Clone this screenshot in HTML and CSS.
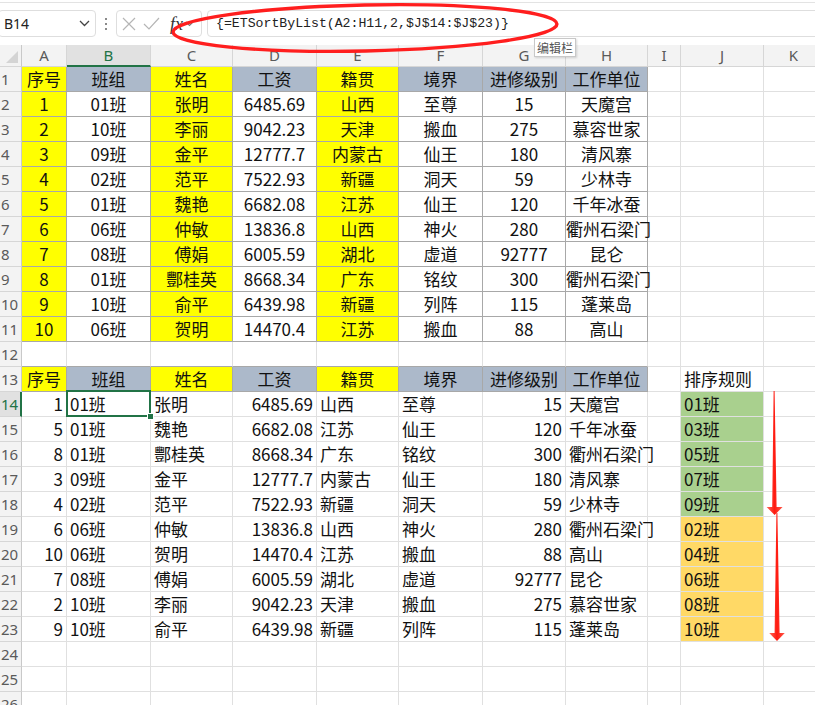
FILE: index.html
```html
<!DOCTYPE html>
<html lang="zh-CN">
<head>
<meta charset="utf-8">
<title>ETSortByList</title>
<link rel="stylesheet" href="styles.css">
</head>
<body>
<div class="app">
  <div class="toolbar">
    <div class="namebox">
      <span class="nb-text">B14</span>
      <svg class="chev" width="11" height="7" viewBox="0 0 11 7"><path d="M1 1 L5.5 5.5 L10 1" fill="none" stroke="#444" stroke-width="1.3"/></svg>
    </div>
    <div class="grip"><i></i><i></i><i></i></div>
    <div class="fxbox">
      <svg class="ico" width="14" height="14" viewBox="0 0 14 14"><path d="M1 1 L13 13 M13 1 L1 13" stroke="#b5b5b5" stroke-width="1.2" fill="none"/></svg>
      <svg class="ico" width="17" height="13" viewBox="0 0 17 13"><path d="M1 7 L6 12 L16 1" stroke="#b5b5b5" stroke-width="1.2" fill="none"/></svg>
      <span class="fx">fx</span>
      <svg class="chev2" width="9" height="6" viewBox="0 0 9 6"><path d="M1 1 L4.5 4.5 L8 1" fill="none" stroke="#777" stroke-width="1.1"/></svg>
    </div>
    <div class="formula">{=ETSortByList(A2:H11,2,$J$14:$J$23)}</div>
  </div>

  <div class="sheet">
    <!-- column headers -->
    <div class="corner"></div>
    <div class="ch">A</div><div class="ch sel">B</div><div class="ch">C</div><div class="ch">D</div><div class="ch">E</div><div class="ch">F</div><div class="ch">G</div><div class="ch">H</div><div class="ch">I</div><div class="ch">J</div><div class="ch">K</div>

    <!-- row 1 -->
    <div class="rh">1</div>
    <div class="c t y m">序号</div><div class="c t s m">班组</div><div class="c t y m">姓名</div><div class="c t s m">工资</div><div class="c t y m">籍贯</div><div class="c t s m">境界</div><div class="c t s m">进修级别</div><div class="c t s m">工作单位</div><div class="c"></div><div class="c"></div><div class="c"></div>
    <!-- row 2 -->
    <div class="rh">2</div>
    <div class="c t y m">1</div><div class="c t m">01班</div><div class="c t y m">张明</div><div class="c t m">6485.69</div><div class="c t y m">山西</div><div class="c t m">至尊</div><div class="c t m">15</div><div class="c t m">天魔宫</div><div class="c"></div><div class="c"></div><div class="c"></div>
    <!-- row 3 -->
    <div class="rh">3</div>
    <div class="c t y m">2</div><div class="c t m">10班</div><div class="c t y m">李丽</div><div class="c t m">9042.23</div><div class="c t y m">天津</div><div class="c t m">搬血</div><div class="c t m">275</div><div class="c t m">慕容世家</div><div class="c"></div><div class="c"></div><div class="c"></div>
    <!-- row 4 -->
    <div class="rh">4</div>
    <div class="c t y m">3</div><div class="c t m">09班</div><div class="c t y m">金平</div><div class="c t m">12777.7</div><div class="c t y m">内蒙古</div><div class="c t m">仙王</div><div class="c t m">180</div><div class="c t m">清风寨</div><div class="c"></div><div class="c"></div><div class="c"></div>
    <!-- row 5 -->
    <div class="rh">5</div>
    <div class="c t y m">4</div><div class="c t m">02班</div><div class="c t y m">范平</div><div class="c t m">7522.93</div><div class="c t y m">新疆</div><div class="c t m">洞天</div><div class="c t m">59</div><div class="c t m">少林寺</div><div class="c"></div><div class="c"></div><div class="c"></div>
    <!-- row 6 -->
    <div class="rh">6</div>
    <div class="c t y m">5</div><div class="c t m">01班</div><div class="c t y m">魏艳</div><div class="c t m">6682.08</div><div class="c t y m">江苏</div><div class="c t m">仙王</div><div class="c t m">120</div><div class="c t m">千年冰蚕</div><div class="c"></div><div class="c"></div><div class="c"></div>
    <!-- row 7 -->
    <div class="rh">7</div>
    <div class="c t y m">6</div><div class="c t m">06班</div><div class="c t y m">仲敏</div><div class="c t m">13836.8</div><div class="c t y m">山西</div><div class="c t m">神火</div><div class="c t m">280</div><div class="c t m">衢州石梁门</div><div class="c"></div><div class="c"></div><div class="c"></div>
    <!-- row 8 -->
    <div class="rh">8</div>
    <div class="c t y m">7</div><div class="c t m">08班</div><div class="c t y m">傅娟</div><div class="c t m">6005.59</div><div class="c t y m">湖北</div><div class="c t m">虚道</div><div class="c t m">92777</div><div class="c t m">昆仑</div><div class="c"></div><div class="c"></div><div class="c"></div>
    <!-- row 9 -->
    <div class="rh">9</div>
    <div class="c t y m">8</div><div class="c t m">01班</div><div class="c t y m">酆桂英</div><div class="c t m">8668.34</div><div class="c t y m">广东</div><div class="c t m">铭纹</div><div class="c t m">300</div><div class="c t m">衢州石梁门</div><div class="c"></div><div class="c"></div><div class="c"></div>
    <!-- row 10 -->
    <div class="rh">10</div>
    <div class="c t y m">9</div><div class="c t m">10班</div><div class="c t y m">俞平</div><div class="c t m">6439.98</div><div class="c t y m">新疆</div><div class="c t m">列阵</div><div class="c t m">115</div><div class="c t m">蓬莱岛</div><div class="c"></div><div class="c"></div><div class="c"></div>
    <!-- row 11 -->
    <div class="rh">11</div>
    <div class="c t y m">10</div><div class="c t m">06班</div><div class="c t y m">贺明</div><div class="c t m">14470.4</div><div class="c t y m">江苏</div><div class="c t m">搬血</div><div class="c t m">88</div><div class="c t m">高山</div><div class="c"></div><div class="c"></div><div class="c"></div>
    <!-- row 12 -->
    <div class="rh">12</div>
    <div class="c bb"></div><div class="c bb"></div><div class="c bb"></div><div class="c bb"></div><div class="c bb"></div><div class="c bb"></div><div class="c bb"></div><div class="c bb"></div><div class="c"></div><div class="c"></div><div class="c"></div>
    <!-- row 13 -->
    <div class="rh">13</div>
    <div class="c t y m">序号</div><div class="c t s m">班组</div><div class="c t y m">姓名</div><div class="c t s m">工资</div><div class="c t y m">籍贯</div><div class="c t s m">境界</div><div class="c t s m">进修级别</div><div class="c t s m">工作单位</div><div class="c"></div><div class="c">排序规则</div><div class="c"></div>
    <!-- row 14 -->
    <div class="rh selr">14</div>
    <div class="c r">1</div><div class="c cur">01班</div><div class="c">张明</div><div class="c r">6485.69</div><div class="c">山西</div><div class="c">至尊</div><div class="c r">15</div><div class="c">天魔宫</div><div class="c"></div><div class="c gn">01班</div><div class="c"></div>
    <!-- row 15 -->
    <div class="rh">15</div>
    <div class="c r">5</div><div class="c">01班</div><div class="c">魏艳</div><div class="c r">6682.08</div><div class="c">江苏</div><div class="c">仙王</div><div class="c r">120</div><div class="c">千年冰蚕</div><div class="c"></div><div class="c gn">03班</div><div class="c"></div>
    <!-- row 16 -->
    <div class="rh">16</div>
    <div class="c r">8</div><div class="c">01班</div><div class="c">酆桂英</div><div class="c r">8668.34</div><div class="c">广东</div><div class="c">铭纹</div><div class="c r">300</div><div class="c">衢州石梁门</div><div class="c"></div><div class="c gn">05班</div><div class="c"></div>
    <!-- row 17 -->
    <div class="rh">17</div>
    <div class="c r">3</div><div class="c">09班</div><div class="c">金平</div><div class="c r">12777.7</div><div class="c">内蒙古</div><div class="c">仙王</div><div class="c r">180</div><div class="c">清风寨</div><div class="c"></div><div class="c gn">07班</div><div class="c"></div>
    <!-- row 18 -->
    <div class="rh">18</div>
    <div class="c r">4</div><div class="c">02班</div><div class="c">范平</div><div class="c r">7522.93</div><div class="c">新疆</div><div class="c">洞天</div><div class="c r">59</div><div class="c">少林寺</div><div class="c"></div><div class="c gn">09班</div><div class="c"></div>
    <!-- row 19 -->
    <div class="rh">19</div>
    <div class="c r">6</div><div class="c">06班</div><div class="c">仲敏</div><div class="c r">13836.8</div><div class="c">山西</div><div class="c">神火</div><div class="c r">280</div><div class="c">衢州石梁门</div><div class="c"></div><div class="c or">02班</div><div class="c"></div>
    <!-- row 20 -->
    <div class="rh">20</div>
    <div class="c r">10</div><div class="c">06班</div><div class="c">贺明</div><div class="c r">14470.4</div><div class="c">江苏</div><div class="c">搬血</div><div class="c r">88</div><div class="c">高山</div><div class="c"></div><div class="c or">04班</div><div class="c"></div>
    <!-- row 21 -->
    <div class="rh">21</div>
    <div class="c r">7</div><div class="c">08班</div><div class="c">傅娟</div><div class="c r">6005.59</div><div class="c">湖北</div><div class="c">虚道</div><div class="c r">92777</div><div class="c">昆仑</div><div class="c"></div><div class="c or">06班</div><div class="c"></div>
    <!-- row 22 -->
    <div class="rh">22</div>
    <div class="c r">2</div><div class="c">10班</div><div class="c">李丽</div><div class="c r">9042.23</div><div class="c">天津</div><div class="c">搬血</div><div class="c r">275</div><div class="c">慕容世家</div><div class="c"></div><div class="c or">08班</div><div class="c"></div>
    <!-- row 23 -->
    <div class="rh">23</div>
    <div class="c r">9</div><div class="c">10班</div><div class="c">俞平</div><div class="c r">6439.98</div><div class="c">新疆</div><div class="c">列阵</div><div class="c r">115</div><div class="c">蓬莱岛</div><div class="c"></div><div class="c or">10班</div><div class="c"></div>
    <!-- row 24 -->
    <div class="rh">24</div>
    <div class="c"></div><div class="c"></div><div class="c"></div><div class="c"></div><div class="c"></div><div class="c"></div><div class="c"></div><div class="c"></div><div class="c"></div><div class="c"></div><div class="c"></div>
    <!-- row 25 -->
    <div class="rh">25</div>
    <div class="c"></div><div class="c"></div><div class="c"></div><div class="c"></div><div class="c"></div><div class="c"></div><div class="c"></div><div class="c"></div><div class="c"></div><div class="c"></div><div class="c"></div>
    <!-- row 26 -->
    <div class="rh">26</div>
    <div class="c"></div><div class="c"></div><div class="c"></div><div class="c"></div><div class="c"></div><div class="c"></div><div class="c"></div><div class="c"></div><div class="c"></div><div class="c"></div><div class="c"></div>
  </div>

  <!-- overlays: annotation ellipse, tooltip, arrows -->
  <svg class="overlay" width="815" height="705" viewBox="0 0 815 705">
    <defs>
      <linearGradient id="ag" x1="0" y1="0" x2="1" y2="0">
        <stop offset="0" stop-color="#ff6a5a"/>
        <stop offset="0.5" stop-color="#ff1a10"/>
        <stop offset="1" stop-color="#ff5a4a"/>
      </linearGradient>
    </defs>
    <ellipse cx="365" cy="28" rx="192" ry="23" transform="rotate(-1.2 365 28)" fill="none" stroke="#ff1e1e" stroke-width="3.4"/>
    <polygon points="773.6,391 774.6,391 776.6,507 782.6,507 774.6,515 766.6,507 772.2,507" fill="url(#ag)"/>
    <polygon points="776.4,513 777.4,513 779.6,633 784.8,633 777,641 769.2,633 774.6,633" fill="url(#ag)"/>
  </svg>
  <div class="tip">编辑栏</div>
</div>
</body>
</html>
```

FILE: styles.css
```css
html, body {
  margin: 0;
  padding: 0;
  background: #ffffff;
}
body {
  width: 815px;
  height: 705px;
  overflow: hidden;
  font-family: "Noto Sans CJK SC", "Noto Sans", sans-serif;
}
.app {
  position: relative;
  width: 815px;
  height: 705px;
  overflow: hidden;
}

/* ---------- toolbar ---------- */
.toolbar {
  height: 43px;
  box-sizing: border-box;
  border-top: 1px solid #e3e3e3;
  margin-top: 2px;
  padding-top: 7px;
  display: flex;
  align-items: flex-start;
}
.namebox {
  width: 98px;
  height: 27px;
  margin-left: -2px;
  box-sizing: border-box;
  border: 1px solid #dedede;
  border-radius: 4px;
  display: flex;
  align-items: center;
  justify-content: space-between;
  padding: 0 5px 0 5px;
  font-size: 14px;
  color: #222;
}
.nb-text { font-family: "Noto Sans", sans-serif; }
.grip {
  width: 20px;
  height: 27px;
  display: flex;
  flex-direction: column;
  align-items: center;
  justify-content: center;
  gap: 3px;
}
.grip i {
  display: block;
  width: 2px;
  height: 2px;
  background: #8a8a8a;
}
.fxbox {
  width: 86px;
  height: 27px;
  box-sizing: border-box;
  border: 1px solid #dedede;
  border-radius: 4px;
  display: flex;
  align-items: center;
  padding-left: 5px;
  gap: 7px;
}
.fxbox .ico { display: block; }
.fx {
  font-family: "Liberation Serif", "DejaVu Serif", serif;
  font-style: italic;
  font-size: 18px;
  color: #333;
  margin-left: 3px;
  line-height: 1;
}
.chev2 { margin-left: -5px; margin-top: 1px; }
.formula {
  flex: 1;
  height: 27px;
  margin-left: 5px;
  margin-right: -6px;
  box-sizing: border-box;
  border: 1px solid #dedede;
  border-radius: 4px;
  padding-left: 8px;
  font-family: "Liberation Mono", "DejaVu Sans Mono", monospace;
  font-size: 13.2px;
  line-height: 25px;
  color: #222;
  white-space: nowrap;
}

/* ---------- sheet ---------- */
.sheet {
  display: grid;
  grid-template-columns: 22px 45px 84px 82px 84px 82px 84px 83px 82px 33px 83px 60px;
  grid-template-rows: 22px;
  grid-auto-rows: 25px;
}
.corner, .ch, .rh {
  box-sizing: border-box;
  background: #f3f3f3;
  color: #5a5a5a;
  font-family: "Noto Sans", sans-serif;
  font-size: 15px;
  text-align: center;
  border-right: 1px solid #d6d6d6;
  border-bottom: 1px solid #d6d6d6;
  white-space: nowrap;
}
.corner {
  position: relative;
  border-right-color: #c9c9c9;
}
.corner::after {
  content: "";
  position: absolute;
  right: 3px;
  bottom: 3px;
  width: 0;
  height: 0;
  border-left: 12px solid transparent;
  border-bottom: 12px solid #d4d4d4;
}
.ch {
  line-height: 21px;
}
.ch.sel {
  background: #e1e1e1;
  color: #217346;
  border-bottom: 2px solid #217346;
}
.rh {
  line-height: 24px;
  border-right-color: #c9c9c9;
  font-size: 15px;
  text-align: left;
  padding-left: 1px;
  overflow: visible;
}
.rh.selr {
  background: #e1e1e1;
  color: #217346;
  border-right: 2px solid #217346;
}
.c {
  box-sizing: border-box;
  border-right: 1px solid #e0e0e0;
  border-bottom: 1px solid #e0e0e0;
  font-size: 17px;
  line-height: 24px;
  color: #111;
  padding: 0 3px;
  white-space: nowrap;
  overflow: visible;
  position: relative;
}
.c.t {
  border-right-color: #a8a8a8;
  border-bottom-color: #a8a8a8;
}
.c.bb {
  border-bottom-color: #a8a8a8;
}
.c.m { text-align: center; padding: 0; }
.c.r { text-align: right; }
.c.y { background: #ffff00; }
.c.s { background: #acb9ca; }
.c.gn { background: #a9d08e; }
.c.or { background: #ffd966; }

.c.cur::after {
  content: "";
  position: absolute;
  left: -1px;
  top: -2px;
  right: -1px;
  bottom: -1px;
  border: 2px solid #217346;
  box-sizing: border-box;
}
.c.cur::before {
  content: "";
  position: absolute;
  right: -3px;
  bottom: -3px;
  width: 5px;
  height: 5px;
  background: #217346;
  outline: 1px solid #ffffff;
  z-index: 2;
}

/* ---------- overlays ---------- */
.overlay {
  position: absolute;
  left: 0;
  top: 0;
  pointer-events: none;
}
.tip {
  position: absolute;
  left: 534px;
  top: 38px;
  height: 19px;
  box-sizing: border-box;
  padding: 0 2px;
  background: #ffffff;
  border: 1px solid #c8c8c8;
  box-shadow: 1px 1px 2px rgba(0,0,0,0.15);
  font-size: 12px;
  line-height: 17px;
  color: #555;
  white-space: nowrap;
}
```
